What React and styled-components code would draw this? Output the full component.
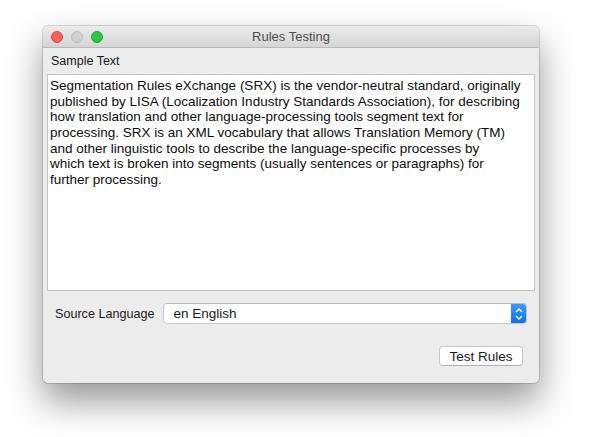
import React from 'react'
import styled, { createGlobalStyle } from 'styled-components'

// line breaks as they fall in the original text view
const sampleLines = [
  'Segmentation Rules eXchange (SRX) is the vendor-neutral standard, originally',
  'published by LISA (Localization Industry Standards Association), for describing',
  'how translation and other language-processing tools segment text for',
  'processing. SRX is an XML vocabulary that allows Translation Memory (TM)',
  'and other linguistic tools to describe the language-specific processes by',
  'which text is broken into segments (usually sentences or paragraphs) for',
  'further processing.',
]

const Global = createGlobalStyle`
    html, body {
        margin: 0;
        padding: 0;
        background: #ffffff;
    }
    body {
        font-family: "Liberation Sans", Arial, sans-serif;
        font-size: 13px;
        color: #1a1a1a;
    }
`

const Desktop = styled.div`
    width: 589px;
    height: 437px;
    padding: 26px 0 0 43px;
    box-sizing: border-box;
`

const Window = styled.div`
    width: 496px;
    height: 357px;
    display: flex;
    flex-direction: column;
    background: #ececec;
    border-radius: 5px;
    overflow: hidden;
    box-shadow: 0 0 0 1px rgba(0, 0, 0, 0.14), 0 18px 36px rgba(0, 0, 0, 0.42);
`

const TitleBar = styled.div`
    height: 21px;
    flex-shrink: 0;
    display: flex;
    align-items: center;
    position: relative;
    padding-left: 8px;
    gap: 8px;
    background: linear-gradient(#ebebeb, #d5d5d5);
    border-bottom: 1px solid #b9b9b9;
`

const Light = styled.span`
    width: 12px;
    height: 12px;
    border-radius: 50%;
    box-sizing: border-box;
    background: ${p => p.$color};
    border: 1px solid ${p => p.$edge};
`

const Title = styled.div`
    position: absolute;
    left: 0;
    right: 0;
    text-align: center;
    font-size: 13px;
    color: #4d4d4d;
    pointer-events: none;
`

const Body = styled.div`
    flex: 1;
    display: flex;
    flex-direction: column;
    padding: 6px 4px 0 4px;
`

const SectionLabel = styled.div`
    padding-left: 4px;
    height: 15px;
    line-height: 15px;
    font-size: 12.5px;
    margin-bottom: 5px;
`

const TextArea = styled.div`
    height: 217px;
    box-sizing: border-box;
    background: #ffffff;
    border: 1px solid #c3c3c3;
    padding: 3px 2px;
    font-size: 13.5px;
    line-height: 15.67px;
    color: #0d0d0d;
    white-space: nowrap;
    overflow: hidden;
`

const TextLine = styled.div``

const FormRow = styled.div`
    display: flex;
    align-items: center;
    gap: 9px;
    margin-top: 12px;
    padding: 0 8px 0 8px;
`

const FieldLabel = styled.span`
    font-size: 12.6px;
`

const Select = styled.div`
    flex: 1;
    height: 21px;
    display: flex;
    align-items: center;
    background: #ffffff;
    border: 1px solid #c8c8c8;
    border-top-color: #bdbdbd;
    border-radius: 4px;
    box-sizing: border-box;
    overflow: hidden;
    font-size: 13.5px;
    padding-left: 9px;
`

const SelectValue = styled.span`
    flex: 1;
`

const Stepper = styled.span`
    width: 16px;
    height: 21px;
    margin-right: -1px;
    display: flex;
    align-items: center;
    justify-content: center;
    background: linear-gradient(#3d9bfb, #0a6ff0);
    border-radius: 0 4px 4px 0;
`

const Footer = styled.div`
    display: flex;
    justify-content: flex-end;
    margin-top: 22px;
    padding-right: 12px;
`

const Button = styled.button`
    width: 84px;
    height: 20px;
    background: #ffffff;
    border: 1px solid #c6c6c6;
    border-bottom-color: #b2b2b2;
    border-radius: 4px;
    font-family: "Liberation Sans", Arial, sans-serif;
    font-size: 13.5px;
    color: #1a1a1a;
    padding: 0;
`

const App = () => {
    return (
        <>
            <Global />
            <Desktop>
                <Window>
                    <TitleBar>
                        <Light $color="#fc5f57" $edge="#e0443e" />
                        <Light $color="#d0d0d0" $edge="#bdbdbd" />
                        <Light $color="#2ac840" $edge="#1ea82f" />
                        <Title>Rules Testing</Title>
                    </TitleBar>
                    <Body>
                        <SectionLabel>Sample Text</SectionLabel>
                        <TextArea>
                            {sampleLines.map((line, i) => (
                                <TextLine key={i}>{line}</TextLine>
                            ))}
                        </TextArea>
                        <FormRow>
                            <FieldLabel>Source Language</FieldLabel>
                            <Select>
                                <SelectValue>en English</SelectValue>
                                <Stepper>
                                    <svg width="8" height="14" viewBox="0 0 8 14">
                                        <path d="M1 5 L4 2 L7 5 M1 9 L4 12 L7 9" fill="none" stroke="#fff" strokeWidth="1.4" />
                                    </svg>
                                </Stepper>
                            </Select>
                        </FormRow>
                        <Footer>
                            <Button>Test Rules</Button>
                        </Footer>
                    </Body>
                </Window>
            </Desktop>
        </>
    )
}

export default App
